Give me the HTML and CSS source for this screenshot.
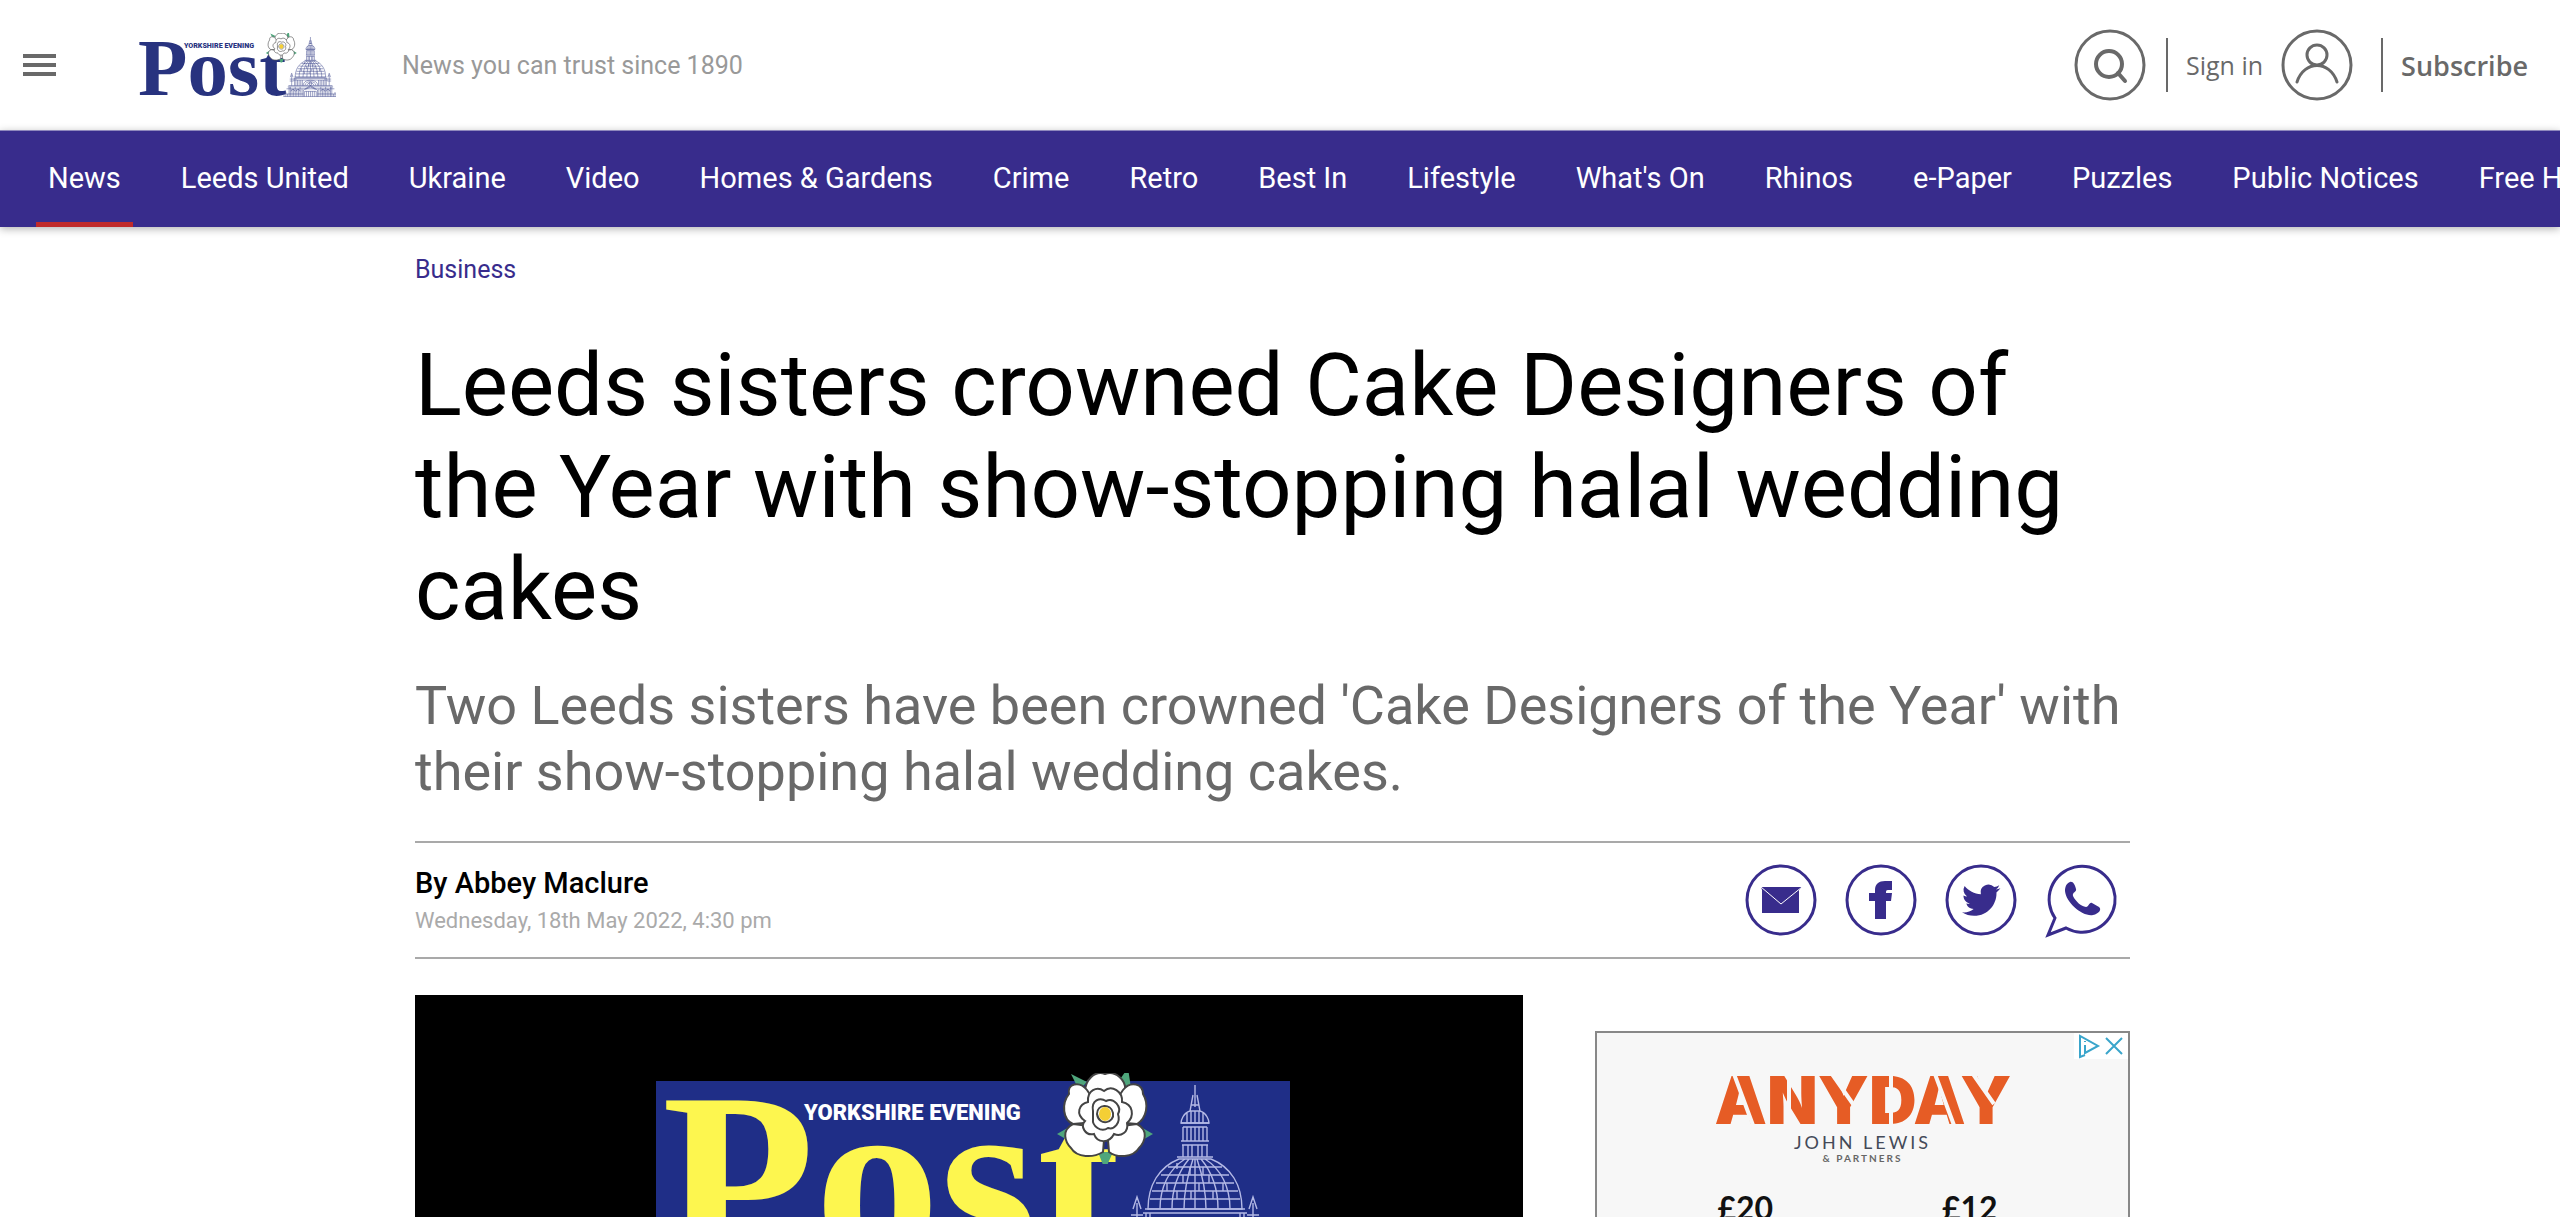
FILE: index.html
```html
<!DOCTYPE html>
<html lang="en">
<head>
<meta charset="utf-8">
<meta name="viewport" content="width=device-width, initial-scale=1">
<title>Leeds sisters crowned Cake Designers of the Year | Yorkshire Evening Post</title>
<link rel="stylesheet" href="styles.css">
</head>
<body>
<svg class="defs" aria-hidden="true">
  <symbol id="rose" viewBox="-48 -48 96 96">
    <g class="leaf">
      <path d="M-26-26-34-42-18-34ZM13-34 23-48 26-28ZM34 10 48 18 34 26ZM-34 10-48 18-34 26ZM-7 36 0 54 8 36Z"/>
    </g>
    <g class="petal">
      <path d="M-20-24C-20-36-10-46 0-42C10-46 22-36 20-24L8-8H-8Z"/>
      <path d="M18-26C26-36 38-32 38-22C44-12 42 2 32 8L10 6 10-14Z"/>
      <path d="M-18-26C-26-36-38-32-36-22C-44-12-42 4-32 8L-10 6-10-14Z"/>
      <path d="M32 8C44 14 40 26 34 32C28 42 12 42 4 36L2 12Z"/>
      <path d="M-32 8C-44 14-40 26-34 32C-28 42-12 42-2 36L0 12Z"/>
      <path d="M-17-14C-18-26-8-30-1-25C7-32 18-24 17-14C28-12 30 0 22 7C24 16 16 21 9 18C4 28-8 27-11 18C-20 20-25 10-20 5C-30-2-26-12-17-14Z"/>
      <path d="M-12-5C-14-16-5-19 1-15C9-19 17-9 13-2C16 7 9 14 3 12C-4 17-13 10-12 3Z"/>
      <path d="M-8-2C-8-12 6-13 8-3C10 7-6 11-8-2Z"/>
    </g>
    <ellipse class="heart" cx="0" cy="-2" rx="6" ry="7"/>
  </symbol>
  <symbol id="dome" viewBox="0 0 168 186">
    <g class="etch">
      <path d="M84 0V22M82 10 79 26H89L86 10M80 20H88M79 26C72 28 70 36 70 38H98C98 36 96 28 89 26M76 28V38M80 26V38M84 26V38M88 26V38M92 28V38"/>
      <path d="M70 38H98M72 42H96M72 42V56M76 42V56M80 42V56M84 42V56M88 42V56M92 42V56M96 42V56M70 56H98M71 60H97M72 60V72M77 60V72M81 60V72M87 60V72M91 60V72M96 60V72M66 72H102"/>
      <path d="M68 74C48 82 37 100 37 124H131C131 100 120 82 100 74ZM74 74C58 84 49 102 49 124M78 74C68 86 61 102 61 124M82 74C78 86 73 102 73 124M84 74V124M86 74C90 86 95 102 95 124M90 74C100 86 107 102 107 124M94 74C110 84 119 102 119 124"/>
      <path d="M57 82H111M50 90H118M45 98H123M41 106H127M39 114H129M66 78V84M79 82V90M92 82V90M72 90V98M98 90V98M56 98V106M88 98V106M112 98V106M66 106V114M80 106V114M102 106V114"/>
      <path d="M34 124H134M32 128H136M30 133H138M35 128V150M39 128V150M44 133V150M49 133V150M54 133V150M59 133V150M109 133V150M114 133V150M119 133V150M124 133V150M129 128V150M133 128V150M62 150C60 128 108 128 106 150M67 150C67 134 101 134 101 150M73 150C74 140 94 140 95 150M80 144A4 5 0 1 0 88 144A4 5 0 1 0 80 144"/>
      <path d="M26 118V150M22 124 26 112 30 124M20 130H32M138 124 142 112 146 124M142 118V150M136 130H148M20 136H32M136 136H148"/>
      <path d="M16 150H152M14 154H154M10 160H158M18 154V184M22 154V184M27 160V184M32 160V184M37 154V184M42 160V184M47 160V184M52 154V184M58 160V184M110 160V184M116 154V184M121 160V184M126 160V184M131 154V184M136 160V184M141 160V184M146 154V184M150 154V184"/>
      <path d="M62 184V164L84 150 106 164V184M66 184V168H102V184M72 184V168M78 184V168M84 184V168M90 184V168M96 184V168M68 162 84 154 100 162M0 176H62M106 176H168M0 184H168M2 170V184M8 170V184M13 176V184M155 176V184M160 170V184M166 170V184M24 168A6 6 0 0 1 36 168M40 168A6 6 0 0 1 52 168M116 168A6 6 0 0 1 128 168M132 168A6 6 0 0 1 144 168"/>
    </g>
  </symbol>
  <symbol id="masthead" viewBox="0 0 612 200">
    <use href="#dome" x="449" y="12" width="168" height="186"/>
    <text class="mast-name" x="0" y="191">Post</text>
    <text class="mast-region" x="142" y="47">YORKSHIRE EVENING</text>
    <use href="#rose" x="395" y="-5" width="96" height="96"/>
  </symbol>
</svg>

<header class="site-header">
  <button class="icon-button menu" type="button" aria-label="Menu">
    <svg viewBox="0 0 33 22" width="33" height="22"><path d="M0 2H33M0 11H33M0 20H33"/></svg>
  </button>
  <a class="brand" href="#" aria-label="Yorkshire Evening Post home">
    <svg class="mast-light" width="198" height="65"><use href="#masthead"/></svg>
  </a>
  <p class="tagline">News you can trust since 1890</p>
  <div class="account">
    <button class="icon-button" type="button" aria-label="Search">
      <svg class="ring" viewBox="0 0 72 72" width="72" height="72"><circle cx="36" cy="36" r="34"/><g class="bold"><circle cx="35" cy="35" r="13"/><path d="M44 44 51 52"/></g></svg>
    </button>
    <a class="sign-in" href="#">Sign in
      <svg class="ring" viewBox="0 0 72 72" width="72" height="72"><circle cx="36" cy="36" r="34"/><circle cx="36" cy="26" r="10"/><path d="M16 53C23 31 49 31 56 53"/></svg>
    </a>
    <a class="subscribe" href="#">Subscribe</a>
  </div>
</header>

<nav class="site-nav" aria-label="Sections">
  <a class="current" href="#">News</a>
  <a href="#">Leeds United</a>
  <a href="#">Ukraine</a>
  <a href="#">Video</a>
  <a href="#">Homes &amp; Gardens</a>
  <a href="#">Crime</a>
  <a href="#">Retro</a>
  <a href="#">Best In</a>
  <a href="#">Lifestyle</a>
  <a href="#">What's On</a>
  <a href="#">Rhinos</a>
  <a href="#">e-Paper</a>
  <a href="#">Puzzles</a>
  <a href="#">Public Notices</a>
  <a href="#">Free H</a>
</nav>

<main class="page">
  <article class="article">
    <a class="category" href="#">Business</a>
    <h1>Leeds sisters crowned Cake Designers of the Year with show-stopping halal wedding cakes</h1>
    <p class="standfirst">Two Leeds sisters have been crowned 'Cake Designers of the Year' with their show-stopping halal wedding cakes.</p>

    <div class="byline">
      <div>
        <p class="author">By Abbey Maclure</p>
        <p class="date">Wednesday, 18th May 2022, 4:30 pm</p>
      </div>
      <div class="share">
        <a href="#" aria-label="Share by email">
          <svg viewBox="0 0 72 72" width="72" height="72"><circle cx="36" cy="36" r="34"/><path class="solid" d="M16 23H57L54 26V49H17V26Z"/><path class="fold" d="M16 23 36 40 57 23"/></svg>
        </a>
        <a href="#" aria-label="Share on Facebook">
          <svg viewBox="0 0 72 72" width="72" height="72"><circle cx="36" cy="36" r="34"/><path class="solid" d="M30 55V37H24V29H30V26C30 20 34 17 40 17H47V26H43C41 26 41 27 41 29H47L46 37H41V55Z"/></svg>
        </a>
        <a href="#" aria-label="Share on Twitter">
          <svg viewBox="0 0 72 72" width="72" height="72"><circle cx="36" cy="36" r="34"/><path class="solid" transform="translate(17 17) scale(1.6)" d="M23.95 4.57a10 10 0 0 1-2.82.77 4.96 4.96 0 0 0 2.16-2.72c-.95.55-2 .95-3.13 1.18a4.92 4.92 0 0 0-8.38 4.48C7.69 8.1 4.07 6.13 1.64 3.16a4.92 4.92 0 0 0 1.52 6.57 4.9 4.9 0 0 1-2.23-.61v.06c0 2.38 1.7 4.37 3.95 4.82a5 5 0 0 1-2.21.09 4.94 4.94 0 0 0 4.6 3.42A9.87 9.87 0 0 1 0 19.54a13.94 13.94 0 0 0 7.55 2.21c9.05 0 14-7.5 14-13.98 0-.21 0-.42-.02-.63a9.94 9.94 0 0 0 2.46-2.55z"/></svg>
        </a>
        <a href="#" aria-label="Share on WhatsApp">
          <svg viewBox="0 0 72 72" width="72" height="72"><path d="M10 54A33 33 0 1 1 21 64L3 71Z"/><path class="solid" d="M25 18C28 17 30 21 31 25C32 28 27 28 28 32C31 38 36 42 41 43C44 43 44 38 47 39L54 43C57 45 54 50 48 51C38 53 21 39 20 27C20 22 22 19 25 18Z"/></svg>
        </a>
      </div>
    </div>

    <div class="columns">
      <figure class="lead">
        <svg class="mast-dark" viewBox="0 0 1108 738" role="img" aria-label="Yorkshire Evening Post">
          <rect class="plate" x="241" y="86" width="634" height="566"/>
          <use href="#masthead" x="247" y="78" width="612" height="200"/>
        </svg>
      </figure>
      <aside class="advert" aria-label="Advertisement">
        <div class="ad-controls">
          <button class="icon-button" type="button" aria-label="About this advert">
            <svg viewBox="0 0 26 26" width="26" height="26"><path d="M9 22 4 24V3L22 13 9 20V12M9 8V9"/></svg>
          </button>
          <button class="icon-button" type="button" aria-label="Close advert">
            <svg viewBox="0 0 26 26" width="26" height="26"><path d="M4 5 20 21M20 5 4 21"/></svg>
          </button>
        </div>
        <svg class="anyday" width="320" height="64">
          <text x="160" y="56">ANYDAY</text>
          <path d="M31 6 51 60M86 6V60M129 6 150 36M188 6V60M232 6 252 60M270 6 291 36"/>
        </svg>
        <div class="store">JOHN LEWIS</div>
        <div class="partners">&amp; PARTNERS</div>
        <div class="prices"><span>£20</span><span>£12</span></div>
      </aside>
    </div>
  </article>
</main>
</body>
</html>
```
FILE: styles.css
```css
:root {
  --brand: #382c8c;
  --grey: #696969;
  --rule: #a9a9a9;
}

* {
  box-sizing: border-box;
}

body {
  display: flex;
  flex-direction: column;
  height: 100vh;
  margin: 0;
  overflow: hidden;
  background: #fff;
  color: #000;
  font-family: Roboto, "Liberation Sans", sans-serif;
}

p,
h1,
figure {
  margin: 0;
}

a {
  color: inherit;
  text-decoration: none;
}

svg {
  display: block;
  fill: none;
  overflow: visible;
}

.defs {
  display: none;
}

.icon-button {
  padding: 0;
  border: 0;
  background: none;
  color: inherit;
}

/* Masthead artwork, coloured by its surroundings */
.mast-light {
  --name: #28337f;
  --region: #28337f;
  --etch: #28337f;
  --petal-line: #555;
}

.mast-dark {
  --name: #fdf64f;
  --region: #fff;
  --etch: #b4b9e6;
  --petal-line: #444;
}

.mast-name {
  fill: var(--name);
  font: bold 250px "Liberation Serif", serif;
}

.mast-region {
  fill: var(--region);
  font: 900 22px "Liberation Sans Narrow", Roboto, sans-serif;
}

.etch {
  stroke: var(--etch);
  stroke-width: 1.4;
}

.leaf {
  fill: #4fa67c;
}

.petal {
  fill: #fff;
  stroke: var(--petal-line);
  stroke-width: 2;
}

.heart {
  fill: #f4cf35;
}

.plate {
  fill: #1f2e87;
}

/* Header */
.site-header {
  display: flex;
  flex: none;
  align-items: center;
  height: 130px;
  padding: 0 32px 0 23px;
  color: var(--grey);
}

.menu path {
  stroke: currentColor;
  stroke-width: 4;
}

.brand {
  margin: 0 66px 0 82px;
}

.tagline {
  color: #999;
  font-size: 25px;
}

.account {
  display: flex;
  align-items: center;
  gap: 20px;
  margin-left: auto;
  font-family: "Open Sans", "Noto Sans", sans-serif;
  font-size: 25px;
}

.ring {
  stroke: currentColor;
  stroke-width: 3;
  stroke-linecap: round;
}

.ring .bold {
  stroke-width: 4;
}

.sign-in,
.subscribe {
  display: flex;
  align-items: center;
  gap: 18px;
}

.sign-in {
  padding-right: 8px;
}

.sign-in::before,
.subscribe::before {
  width: 2px;
  height: 54px;
  background: var(--grey);
  content: "";
}

.subscribe {
  font-size: 27px;
  font-weight: 600;
}

/* Section navigation */
.site-nav {
  display: flex;
  z-index: 1;
  flex: none;
  gap: 36px;
  height: 97px;
  padding: 0 36px;
  border-top: 1px solid #8f88bd;
  background: var(--brand);
  box-shadow: 0 2px 8px rgba(0, 0, 0, 0.3);
  color: #fff;
  font-size: 29px;
  white-space: nowrap;
}

.site-nav a {
  padding: 0 12px;
  border-bottom: 5px solid transparent;
  line-height: 95px;
}

.site-nav .current {
  border-color: #c02a2a;
}

/* Article */
.page {
  flex: 1;
  min-height: 0;
  padding-right: 15px;
  overflow: hidden;
}

.article {
  max-width: 1715px;
  margin: 0 auto;
  padding-top: 26px;
}

.category {
  display: block;
  color: var(--brand);
  font-size: 25px;
  line-height: 34px;
}

h1 {
  margin-top: 47px;
  font-size: 87px;
  font-weight: 400;
  line-height: 102px;
}

.standfirst {
  margin-top: 33px;
  color: var(--grey);
  font-size: 54px;
  line-height: 66px;
}

.byline {
  display: flex;
  align-items: center;
  justify-content: space-between;
  height: 118px;
  margin-top: 36px;
  padding-right: 13px;
  border: solid var(--rule);
  border-width: 2px 0;
}

.author {
  font-size: 29px;
  font-weight: 500;
  line-height: 42px;
}

.date {
  color: #aaa;
  font-size: 22px;
  line-height: 34px;
}

.share {
  display: flex;
  gap: 28px;
}

.share svg {
  stroke: var(--brand);
  stroke-width: 3;
}

.share .solid {
  fill: var(--brand);
  stroke: none;
}

.share .fold {
  stroke: #fff;
  stroke-width: 1;
}

.columns {
  display: grid;
  grid-template-columns: 1108fr 535fr;
  align-items: start;
  gap: 72px;
  margin-top: 36px;
}

.lead {
  background: #000;
}

/* Advert */
.advert {
  margin-top: 36px;
  padding-bottom: 200px;
  border: 2px solid #888;
  background: #f7f7f7;
  text-align: center;
}

.ad-controls {
  display: flex;
  justify-content: flex-end;
  width: 54px;
  margin-left: auto;
  background: #fff;
}

.ad-controls svg {
  stroke: #3aa5cb;
  stroke-width: 2;
}

.anyday {
  margin: 9px auto 0;
}

.anyday text {
  fill: #e65c25;
  font: 900 66px Inter, sans-serif;
  text-anchor: middle;
}

/* Stencil breaks across the letters */
.anyday path {
  stroke: #f7f7f7;
  stroke-width: 4;
}

.store {
  color: #444a58;
  font: 18px/20px Lato, sans-serif;
  letter-spacing: 3px;
}

.partners {
  color: #666;
  font: bold 10px/12px Lato, sans-serif;
  letter-spacing: 2px;
}

.prices {
  display: flex;
  justify-content: space-around;
  margin-top: 24px;
  padding: 0 46px 0 36px;
  color: #111;
  font: bold 32px/40px Lato, sans-serif;
}
```
